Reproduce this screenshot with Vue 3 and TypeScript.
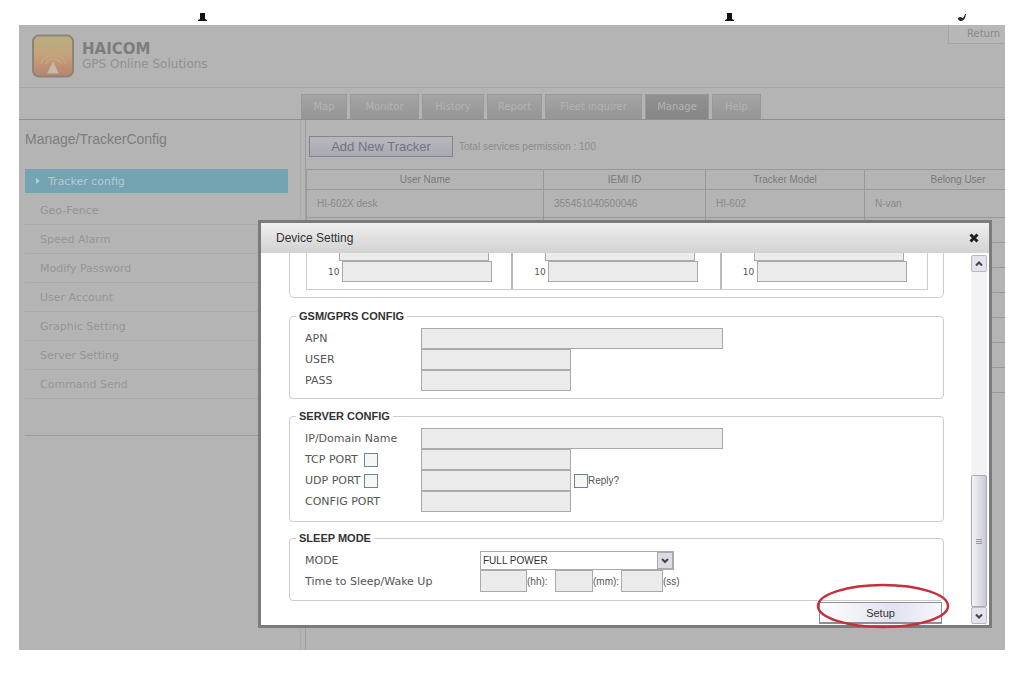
<script setup lang="ts">
import { ref } from 'vue'

const tabs = [
  { label: 'Map', width: 46 },
  { label: 'Monitor', width: 69 },
  { label: 'History', width: 62 },
  { label: 'Report', width: 55 },
  { label: 'Fleet inquirer', width: 97 },
  { label: 'Manage', width: 64, active: true },
  { label: 'Help', width: 49 },
]

const menu = [
  'Geo-Fence',
  'Speed Alarm',
  'Modify Password',
  'User Account',
  'Graphic Setting',
  'Server Setting',
  'Command Send',
]

const emptyRows = 7
const phoneColumns = [1, 2, 3]
const mode = ref('FULL POWER')
</script>

<template>
  <div class="page">
    <svg class="caption" viewBox="0 0 1024 25" preserveAspectRatio="none" aria-hidden="true">
      <path d="M200 13h5v6l2 1v1h-9v-1l2-1zM727 13h5v6l2 1v1h-9v-1l2-1z" fill="#111" />
      <path d="M958 18q3-2 4 0q2 0 3-4h1q-1 7-5 7q-3 0-3-3z" fill="#222" />
    </svg>

    <div class="screen">
      <header class="header">
        <svg class="logo" viewBox="0 0 44 44" aria-hidden="true">
          <defs>
            <linearGradient id="logo-fill" x1="0" y1="0" x2="0" y2="1">
              <stop offset="0" stop-color="#b5b083" />
              <stop offset="0.45" stop-color="#c4a37b" />
              <stop offset="1" stop-color="#b58470" />
            </linearGradient>
          </defs>
          <rect x="1" y="1" width="41" height="42" rx="6" fill="url(#logo-fill)" stroke="#8f8378" stroke-width="2" />
          <path d="M9 30a14 14 0 0 1 26 0M14 30a9 9 0 0 1 16 0" fill="none" stroke="#c5a581" stroke-width="2" />
          <path d="M21.500 28l6 12h-12z" fill="#c9baa8" />
        </svg>
        <div class="brand">
          <strong>HAICOM</strong>
          <span>GPS Online Solutions</span>
        </div>
        <button class="return" type="button">Return</button>
      </header>

      <nav class="tabs">
        <a
          v-for="tab in tabs"
          :key="tab.label"
          href="#"
          class="tab"
          :class="{ active: tab.active }"
          :style="{ width: tab.width + 'px' }"
        >{{ tab.label }}</a>
      </nav>

      <div class="columns">
        <aside class="sidebar">
          <h1>Manage/TrackerConfig</h1>
          <a href="#" class="current"><span class="marker"></span>Tracker config</a>
          <a v-for="item in menu" :key="item" href="#" class="item">{{ item }}</a>
          <div class="end"></div>
        </aside>

        <main class="content">
          <div class="toolbar">
            <button class="add" type="button">Add New Tracker</button>
            <span>Total services permission : 100</span>
          </div>
          <table class="trackers">
            <thead>
              <tr>
                <th class="c-name">User Name</th>
                <th class="c-id">IEMI ID</th>
                <th class="c-model">Tracker Model</th>
                <th class="c-user">Belong User</th>
              </tr>
            </thead>
            <tbody>
              <tr class="first">
                <td>HI-602X desk</td>
                <td>355451040500046</td>
                <td>HI-602</td>
                <td>N-van</td>
              </tr>
              <tr v-for="n in emptyRows" :key="n"><td></td><td></td><td></td><td></td></tr>
            </tbody>
          </table>
        </main>
      </div>

      <section class="dialog" role="dialog" aria-labelledby="dialog-title">
        <div class="titlebar">
          <h2 id="dialog-title">Device Setting</h2>
          <button class="close" type="button" aria-label="Close">
            <svg viewBox="0 0 10 10"><path d="M1.500 1.500l7 7M8.500 1.500l-7 7" stroke="#222" stroke-width="3" /></svg>
          </button>
        </div>
        <div class="body">
          <form class="form" @submit.prevent>
            <div class="phones">
              <div class="phone-grid">
                <div v-for="col in phoneColumns" :key="col" class="phone">
                  <input class="previous" type="text" aria-label="9" />
                  <div class="phone-row">
                    <label :for="'phone-' + col">10</label>
                    <input :id="'phone-' + col" type="text" />
                  </div>
                </div>
              </div>
            </div>

            <fieldset class="gsm">
              <legend>GSM/GPRS CONFIG</legend>
              <div class="row"><label for="apn">APN</label><input id="apn" class="long" type="text" /></div>
              <div class="row"><label for="user">USER</label><input id="user" type="text" /></div>
              <div class="row"><label for="pass">PASS</label><input id="pass" type="text" /></div>
            </fieldset>

            <fieldset class="server">
              <legend>SERVER CONFIG</legend>
              <div class="row"><label for="ip">IP/Domain Name</label><input id="ip" class="long" type="text" /></div>
              <div class="row">
                <span class="key"><label for="tcp-on">TCP PORT</label><input id="tcp-on" type="checkbox" /></span>
                <input type="text" aria-label="TCP port number" />
              </div>
              <div class="row">
                <span class="key"><label for="udp-on">UDP PORT</label><input id="udp-on" type="checkbox" /></span>
                <input type="text" aria-label="UDP port number" />
                <input id="reply" class="reply" type="checkbox" /><label class="small" for="reply">Reply?</label>
              </div>
              <div class="row"><label for="config">CONFIG PORT</label><input id="config" type="text" /></div>
            </fieldset>

            <fieldset class="sleep">
              <legend>SLEEP MODE</legend>
              <div class="row">
                <label for="mode">MODE</label>
                <span class="select">
                  <select id="mode" v-model="mode"><option>FULL POWER</option></select>
                  <span class="drop"><svg viewBox="0 0 10 10"><path d="M2 3l3 3l3-3" fill="none" stroke="#444" stroke-width="2" /></svg></span>
                </span>
              </div>
              <div class="row time">
                <label for="hh">Time to Sleep/Wake Up</label>
                <input id="hh" class="hh" type="text" /><label class="small unit" for="hh">(hh):</label>
                <input id="mm" class="mm" type="text" /><label class="small unit" for="mm">(mm):</label>
                <input id="ss" class="ss" type="text" /><label class="small" for="ss">(ss)</label>
              </div>
            </fieldset>

            <div class="actions">
              <button class="setup" type="submit">Setup</button>
              <svg class="ring" viewBox="0 0 134 46" aria-hidden="true">
                <ellipse cx="67" cy="23" rx="65" ry="21" fill="none" stroke="#c4313c" stroke-width="2.500" />
              </svg>
            </div>
          </form>

          <div class="scrollbar" aria-hidden="true">
            <span class="arrow"><svg viewBox="0 0 10 10"><path d="M2 6.500l3-3l3 3" fill="none" stroke="#444" stroke-width="2" /></svg></span>
            <span class="track"></span>
            <span class="thumb"><i></i><i></i><i></i></span>
            <span class="arrow"><svg viewBox="0 0 10 10"><path d="M2 3.500l3 3l3-3" fill="none" stroke="#444" stroke-width="2" /></svg></span>
          </div>
        </div>
      </section>
    </div>
  </div>
</template>

<style>
body {
  background: #fff;
}
</style>

<style scoped>
* {
  box-sizing: border-box;
}
.page {
  display: flex;
  flex-direction: column;
  min-height: 100vh;
  padding-bottom: 26px;
  font-family: "DejaVu Sans", sans-serif;
  font-size: 11px;
}
.caption {
  display: block;
  width: 100%;
  height: 25px;
}
.screen {
  position: relative;
  display: flex;
  flex: 1;
  flex-direction: column;
  margin: 0 19px;
  background: #b4b4b4;
  color: #8a8a8a;
  overflow: hidden;
}
a {
  color: inherit;
  text-decoration: none;
}
button {
  margin: 0;
  padding: 0;
  font-family: inherit;
}
.header {
  display: flex;
  align-items: flex-start;
  height: 63px;
  padding-left: 13px;
  border-bottom: 1px solid #a6a6a6;
}
.logo {
  width: 43px;
  height: 44px;
  margin: 9px 7px 0 0;
}
.brand {
  display: flex;
  flex: 1;
  flex-direction: column;
  margin-top: 16px;
}
.brand strong {
  color: #7d7d7d;
  font-size: 15px;
  line-height: 17px;
}
.brand span {
  color: #919191;
  font-size: 12px;
  line-height: 13px;
}
.return {
  width: 57px;
  height: 19px;
  padding-left: 18px;
  border: 1px solid #a5a5a5;
  border-width: 0 0 1px 1px;
  background: #b7b7b7;
  color: #898989;
  font-size: 10px;
  line-height: 14px;
  text-align: left;
  overflow: hidden;
}
.tabs {
  display: flex;
  gap: 3px;
  height: 32px;
  padding: 6px 0 0 282px;
  border-bottom: 1px solid #8f8f8f;
}
.tab {
  height: 25px;
  border: 1px solid #999;
  border-bottom: 0;
  background: linear-gradient(#a5a5a5, #959595);
  color: #b3b3b3;
  font-size: 10px;
  line-height: 24px;
  text-align: center;
}
.tab.active {
  background: linear-gradient(#919191, #868686);
}
.columns {
  display: flex;
  flex: 1;
}
.sidebar {
  flex: 0 0 282px;
  padding: 11px 12px 0 6px;
  border-right: 1px solid #aaa;
}
.sidebar h1 {
  margin: 0 0 22px;
  color: #7e7e7e;
  font-family: "Liberation Sans", sans-serif;
  font-size: 14px;
  font-weight: 400;
  line-height: 16px;
}
.current {
  display: flex;
  align-items: center;
  height: 24px;
  margin-bottom: 3px;
  padding-left: 11px;
  background: #74a3b2;
  color: #b5cbd2;
}
.marker {
  margin-right: 8px;
  border: 3px solid transparent;
  border-left: 4px solid #b5cbd2;
  border-right: 0;
}
.item {
  display: block;
  height: 29px;
  padding-left: 15px;
  border-bottom: 1px solid #aaa;
  color: #969696;
  line-height: 29px;
}
.end {
  height: 37px;
  border-bottom: 1px solid #9c9c9c;
}
.content {
  flex: 1;
  min-width: 0;
  margin-left: 4px;
  border-left: 1px solid #a0a0a0;
  overflow: hidden;
}
.toolbar {
  display: flex;
  align-items: center;
  gap: 6px;
  height: 49px;
  padding: 3px 0 0 3px;
  color: #8c8c8c;
  font-family: "Liberation Sans", sans-serif;
  font-size: 10px;
}
.add {
  width: 144px;
  height: 21px;
  border: 1px solid #858590;
  background: linear-gradient(#b8b8bc, #a9a9b5);
  color: #74747f;
  font-family: "Liberation Sans", sans-serif;
  font-size: 13px;
}
.trackers {
  width: 745px;
  border-collapse: collapse;
  table-layout: fixed;
  font-family: "Liberation Sans", sans-serif;
  font-size: 10px;
}
.trackers th,
.trackers td {
  height: 25px;
  padding: 0 10px;
  border: 1px solid #999;
  font-weight: 400;
  text-align: left;
}
.trackers th {
  height: 20px;
  color: #7a7a7a;
  text-align: center;
}
.trackers .first td {
  height: 28px;
}
.c-name { width: 237px; }
.c-id { width: 162px; }
.c-model { width: 159px; }
.c-user { width: 187px; }

.dialog {
  position: absolute;
  top: 195px;
  right: 13px;
  bottom: 22px;
  left: 239px;
  display: flex;
  flex-direction: column;
  border: 3px solid #7b7b7b;
  background: #fff;
  color: #555;
}
.titlebar {
  display: flex;
  flex: 0 0 30px;
  align-items: center;
  justify-content: space-between;
  padding: 0 10px 0 15px;
  background: linear-gradient(#efefef, #d2d2d2);
}
.titlebar h2 {
  margin: 0;
  color: #333;
  font-family: "Liberation Sans", sans-serif;
  font-size: 12px;
  font-weight: 400;
}
.close {
  width: 10px;
  height: 10px;
  border: 0;
  background: none;
}
.close svg {
  display: block;
}
.body {
  display: flex;
  flex: 1;
  min-height: 0;
}
.form {
  flex: 1;
  min-width: 0;
  padding: 0 27px 0 28px;
}
input[type="text"] {
  width: 150px;
  height: 21px;
  margin: 0;
  padding: 0 3px;
  border: 1px solid #aaa;
  border-radius: 0;
  background: #ebebeb;
  font-size: 11px;
}
input[type="checkbox"] {
  appearance: none;
  width: 14px;
  height: 14px;
  margin: 0;
  border: 1px solid #6c8590;
  background: #f5f7f7;
}
.phones {
  margin-bottom: 11px;
  padding: 0 15px 7px 16px;
  border: 1px solid #ccc;
  border-top: 0;
  border-radius: 0 0 5px 5px;
}
.phone-grid {
  display: grid;
  grid-template-columns: 205fr 209fr 208fr;
  border: 1px solid #ccc;
  border-top: 0;
}
.phone {
  padding: 0 0 7px 32px;
}
.phone + .phone {
  border-left: 2px solid #bbb;
}
input.previous {
  display: block;
  height: 8px;
  border-top: 0;
}
.phone-row {
  display: flex;
  align-items: center;
  margin-left: -11px;
}
.phone-row label {
  width: 14px;
  font-size: 9px;
}
fieldset {
  min-width: 0;
  margin: 0;
  padding: 5px 15px 7px;
  border: 1px solid #ccc;
  border-radius: 4px;
}
legend {
  margin-left: -9px;
  padding: 0 3px;
  color: #333;
  font-family: "Liberation Sans", sans-serif;
  font-size: 11px;
  font-weight: 700;
  line-height: 14px;
}
.gsm {
  margin-bottom: 10px;
}
.server {
  margin-bottom: 9px;
  padding-bottom: 9px;
}
.sleep {
  padding: 6px 15px 8px;
}
.row {
  display: flex;
  align-items: center;
}
.row > label:first-child,
.key {
  flex: 0 0 116px;
}
.key {
  display: flex;
  align-items: center;
}
.key label {
  width: 59px;
}
.row input.long {
  width: 302px;
}
.row input.reply {
  margin-left: 3px;
}
.small {
  font-family: "Liberation Sans", sans-serif;
  font-size: 10px;
}
.sleep .row > label:first-child {
  flex-basis: 175px;
}
.select {
  display: flex;
  width: 194px;
  height: 19px;
  border: 1px solid #aaa;
}
select {
  appearance: none;
  flex: 1;
  margin: 0;
  padding: 0 2px;
  border: 0;
  border-radius: 0;
  background: #fff;
  color: #333;
  font-family: "Liberation Sans", sans-serif;
  font-size: 10px;
}
.drop {
  display: flex;
  align-items: center;
  width: 16px;
  padding: 2px;
  border: 1px solid #aaa;
  background: #dcdce4;
}
.drop svg,
.arrow svg {
  width: 100%;
}
.time input {
  height: 22px;
}
.row input.hh { width: 47px; }
.row input.mm { width: 38px; }
.row input.ss { width: 42px; }
.unit {
  width: 28px;
}
.actions {
  position: relative;
  display: flex;
  justify-content: flex-end;
  padding: 1px 2px 0 0;
}
.setup {
  width: 123px;
  height: 22px;
  border: 1px solid #8a8f99;
  border-bottom: 2px solid #8a8f99;
  background: linear-gradient(90deg, #fff, #e2e2f0 60%, #f6f6fa);
  color: #333;
  font-family: "Liberation Sans", sans-serif;
  font-size: 11px;
}
.ring {
  position: absolute;
  top: -18px;
  right: -6px;
  width: 134px;
  height: 46px;
  pointer-events: none;
}
.scrollbar {
  display: flex;
  flex-direction: column;
  flex: 0 0 16px;
  margin: 2px 2px 1px 0;
  background: #f3f3f6;
}
.arrow {
  display: flex;
  align-items: center;
  height: 17px;
  padding: 2px;
  border: 1px solid #bbb;
  border-radius: 2px;
  background: #e4e4ee;
}
.track {
  flex: 204;
}
.thumb {
  display: flex;
  flex: 130;
  flex-direction: column;
  align-items: center;
  justify-content: center;
  gap: 1px;
  border: 1px solid #aaa;
  border-radius: 2px;
  background: linear-gradient(90deg, #f4f4f8, #c9c9d6);
}
.thumb i {
  width: 6px;
  height: 1px;
  background: #999;
}
</style>
